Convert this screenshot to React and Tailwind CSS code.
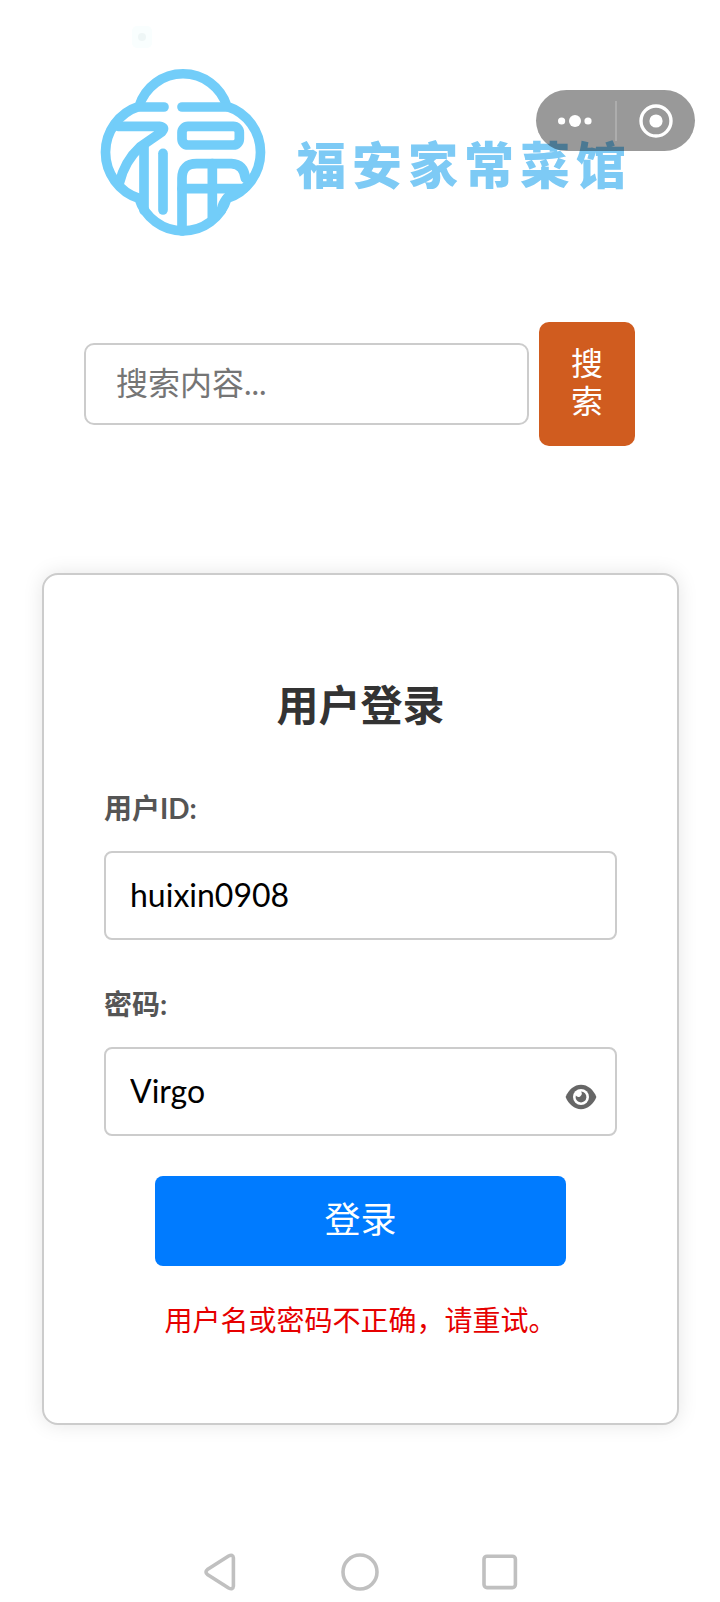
import React, { useState } from 'react';

const Logo = () => {
  return (
    <svg
      className="w-[170px] h-[172px] shrink-0"
      viewBox="24 168 510 516"
      fill="none"
      stroke="#72cdf9"
      strokeWidth="29"
      strokeLinecap="round"
      strokeLinejoin="round"
      aria-hidden="true"
    >
      {/* four-lobed frame */}
      <path d="M147 286 A138 138 0 0 1 411 286 A145 145 0 0 1 411 562 A138 138 0 0 1 147 562 A145 145 0 0 1 147 286 Z" />
      {/* left radical */}
      <path d="M150 288 H222" />
      <path d="M84 346 H208 Q228 348 216 362 L150 408 Q104 450 88 516" />
      <path d="M162 408 V598" />
      <path d="M219 427 V597" />
      {/* right part */}
      <path d="M276 288 H412" />
      <rect x="276" y="346" width="172" height="56" rx="18" />
      <path d="M276 660 V502 Q276 458 320 458 H424 Q462 460 466 502" />
      <path d="M367 458 V622" />
      <path d="M276 533 H462" />
      <path d="M446 536 Q402 556 394 598" />
    </svg>
  );
};

const Capsule = () => {
  return (
    <div className="absolute top-[90px] right-[25px] w-[159px] h-[61px] flex items-center rounded-full bg-black/40">
      <button type="button" aria-label="更多" className="flex-1 flex justify-center">
        <svg className="w-9 h-9" viewBox="0 0 36 36" fill="#fff">
          <circle cx="4.6" cy="18" r="3.6" />
          <circle cx="18" cy="18" r="6" />
          <circle cx="31" cy="18" r="3.6" />
        </svg>
      </button>
      <span className="w-0.5 h-10 bg-white/20" />
      <button type="button" aria-label="关闭" className="flex-1 flex justify-center">
        <svg className="w-9 h-9" viewBox="0 0 36 36">
          <circle cx="18" cy="18" r="15" fill="none" stroke="#fff" strokeWidth="3.4" />
          <circle cx="18" cy="18" r="6.6" fill="#fff" />
        </svg>
      </button>
    </div>
  );
};

const EyeIcon = () => {
  return (
    <svg className="w-8 h-8" viewBox="0 0 32 32">
      <path
        d="M.6 16 C3.6 8.6 9.4 3.8 16 3.8 S28.4 8.6 31.4 16 C28.4 23.4 22.6 28.2 16 28.2 S3.6 23.4 .6 16 Z"
        fill="#666"
      />
      <circle cx="16" cy="16" r="8" fill="#fff" />
      <path d="M16 10.6 A5.4 5.4 0 1 1 10.8 14.6 A3 3 0 0 0 16 10.6 Z" fill="#666" />
    </svg>
  );
};

const SearchBar = () => {
  return (
    <form className="ml-[84px] mr-[85px] flex items-center gap-2.5" onSubmit={(e) => e.preventDefault()}>
      <input
        type="search"
        aria-label="搜索内容"
        placeholder="搜索内容..."
        className="min-w-0 flex-1 h-[82px] px-[30px] pb-1 text-[32px] border-2 border-[#ccc] rounded-[10px] bg-white placeholder:text-[#757575] outline-none"
      />
      <button
        type="submit"
        className="w-24 px-8 pt-[22px] pb-[26px] text-[32px] leading-[38px] text-white bg-[#d05c1f] rounded-[10px]"
      >
        搜索
      </button>
    </form>
  );
};

const LoginCard = () => {
  const [userId, setUserId] = useState('huixin0908');
  const [password, setPassword] = useState('Virgo');
  const [visible, setVisible] = useState(true);

  return (
    <form
      className="ml-[42px] mr-[41px] px-[60px] pt-[100px] pb-[83px] border-2 border-[#ccc] rounded-2xl bg-white shadow-[0_0_20px_rgba(0,0,0,0.1)]"
      onSubmit={(e) => e.preventDefault()}
    >
      <h2 className="mb-[53px] text-[42px] leading-[60px] font-bold text-center text-[#333]">用户登录</h2>

      <label htmlFor="userId" className="block mb-[23px] text-[28px] leading-10 font-bold text-[#555]">
        用户ID:
      </label>
      <input
        id="userId"
        type="text"
        value={userId}
        onChange={(e) => setUserId(e.target.value)}
        className="block w-full h-[89px] mb-11 px-6 pb-0.5 text-[32px] text-black border-2 border-[#ccc] rounded-lg outline-none"
      />

      <label htmlFor="password" className="block mb-[23px] text-[28px] leading-10 font-bold text-[#555]">
        密码:
      </label>
      <div className="relative mb-10">
        <input
          id="password"
          type={visible ? 'text' : 'password'}
          value={password}
          onChange={(e) => setPassword(e.target.value)}
          className="block w-full h-[89px] pl-6 pr-16 pb-0.5 text-[32px] text-black border-2 border-[#ccc] rounded-lg outline-none"
        />
        <button
          type="button"
          aria-label="显示密码"
          className="absolute right-5 top-[34px]"
          onClick={() => setVisible(!visible)}
        >
          <EyeIcon />
        </button>
      </div>

      <button
        type="submit"
        className="block w-4/5 h-[90px] mx-auto mb-[34px] pb-1 text-[36px] text-white bg-[#007bff] rounded-lg"
      >
        登录
      </button>
      <p className="text-[28px] leading-10 text-center text-[#e60000]">用户名或密码不正确，请重试。</p>
    </form>
  );
};

const SystemNav = () => {
  return (
    <nav className="flex justify-center gap-[100px] pt-[127px] pb-2">
      <button type="button" aria-label="返回">
        <svg className="w-10 h-10" viewBox="0 0 40 40" fill="none" stroke="#c0c0c0" strokeWidth="3.6" strokeLinejoin="round">
          <path d="M7.4 17.6 L28.6 4 Q33 1.8 33.4 6 V34 Q33 38.2 28.6 36 L7.4 22.4 Q4.6 20 7.4 17.6 Z" />
        </svg>
      </button>
      <button type="button" aria-label="主页">
        <svg className="w-10 h-10" viewBox="0 0 40 40" fill="none" stroke="#c0c0c0" strokeWidth="3.6">
          <circle cx="20" cy="20" r="17" />
        </svg>
      </button>
      <button type="button" aria-label="最近任务">
        <svg className="w-10 h-10" viewBox="0 0 40 40" fill="none" stroke="#c0c0c0" strokeWidth="3.6">
          <rect x="4" y="4.2" width="31.4" height="31.4" rx="3" />
        </svg>
      </button>
    </nav>
  );
};

const App = () => {
  return (
    <div className="relative min-h-screen bg-white font-['Lato','Noto_Sans_CJK_SC',sans-serif]">
      <header className="pt-[26px] pb-[83px]">
        <div className="pl-[132px]">
          <svg className="block w-5 h-[22px]" viewBox="0 0 20 22" aria-hidden="true">
            <rect width="20" height="22" rx="5" fill="#f9fefe" />
            <circle cx="10" cy="11" r="4" fill="#eef6f6" />
          </svg>
        </div>
        <div className="flex items-center justify-center gap-7 pt-[19px] pl-2.5">
          <Logo />
          <h1 className="mt-6 text-[50px] leading-[60px] font-black tracking-[6px] whitespace-nowrap text-[#7dcaf5]">
            福安家常菜馆
          </h1>
        </div>
      </header>
      <Capsule />

      <main className="flex flex-col gap-[127px]">
        <SearchBar />
        <LoginCard />
      </main>
      <SystemNav />
    </div>
  );
};

export default App;
